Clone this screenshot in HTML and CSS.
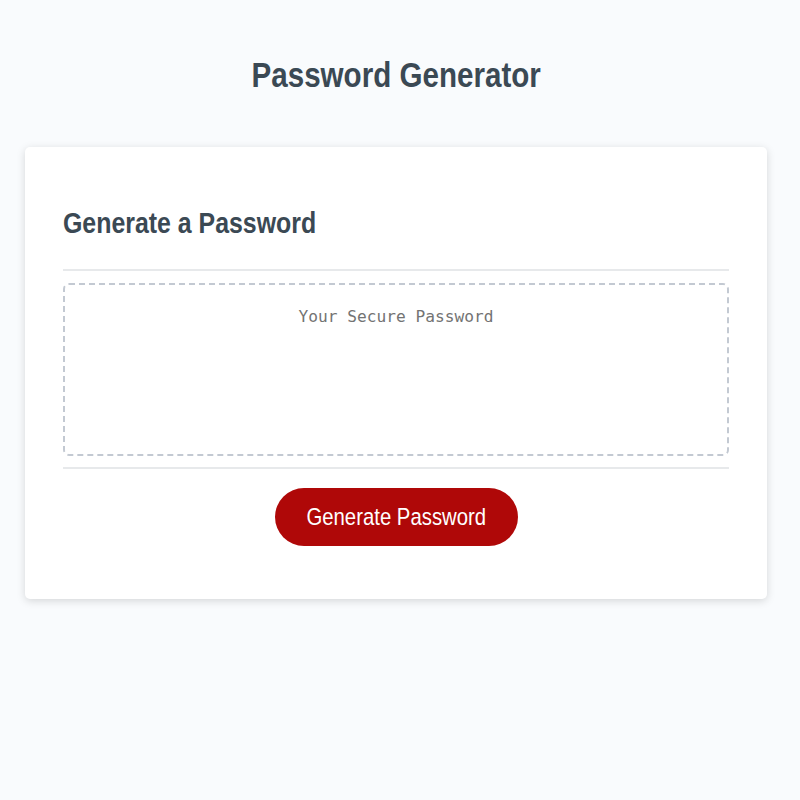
FILE: index.html
```html
<!DOCTYPE html>
<html lang="en">
<head>
<meta charset="UTF-8">
<title>Password Generator</title>
<link rel="stylesheet" href="styles.css">
</head>
<body>
<div class="wrapper">
  <header class="page-header">
    <h1 class="page-title"><span class="squeeze squeeze-center">Password Generator</span></h1>
  </header>
  <div class="card">
    <div class="card-header">
      <h2 class="card-title"><span class="squeeze squeeze-left">Generate a Password</span></h2>
    </div>
    <div class="card-body">
      <textarea class="password" readonly placeholder="Your Secure Password" aria-label="Generated Password"></textarea>
    </div>
    <div class="card-footer">
      <button class="btn" type="button"><span class="squeeze squeeze-center">Generate Password</span></button>
    </div>
  </div>
</div>
</body>
</html>
```

FILE: styles.css
```css
* {
  box-sizing: border-box;
}

html, body {
  margin: 0;
  padding: 0;
}

body {
  background-color: #f9fbfd;
  font-family: "Liberation Sans", Arial, sans-serif;
  color: #3b4954;
}

.squeeze {
  display: inline-block;
  white-space: nowrap;
}

.squeeze-center {
  transform-origin: center center;
}

.squeeze-left {
  transform-origin: left center;
}

.wrapper {
  padding: 55px 33px 40px 25px;
}

.page-header {
  text-align: center;
  margin-bottom: 52px;
}

.page-title {
  margin: 0;
  font-size: 35px;
  line-height: 40px;
  font-weight: bold;
  color: #3b4954;
}

.page-title .squeeze {
  transform: scaleX(0.845);
}

.card {
  background-color: #ffffff;
  border-radius: 5px;
  box-shadow: rgba(0, 0, 0, 0.15) 0 2px 8px 0;
  padding: 59px 38px 53px 38px;
}

.card-title {
  margin: 0 0 29px 0;
  font-size: 29px;
  line-height: 34px;
  font-weight: bold;
  color: #3b4954;
}

.card-title .squeeze {
  transform: scaleX(0.858);
}

.card-header::after,
.card-footer::before {
  content: "";
  display: block;
  width: 100%;
  height: 2px;
  background: #e7e9eb;
}

.card-body {
  padding: 12px 0 11px 0;
}

.password {
  display: block;
  width: 100%;
  height: 173px;
  margin: 0;
  padding: 22px 20px;
  border: 2px dashed #c3c9d2;
  border-radius: 6px;
  background: transparent;
  font-family: "DejaVu Sans Mono", "Liberation Mono", monospace;
  font-size: 16.2px;
  text-align: center;
  resize: none;
  outline: none;
  color: #3b4954;
}

.password::placeholder {
  color: #737373;
  opacity: 1;
}

.card-footer {
  text-align: center;
}

.btn {
  display: inline-block;
  margin-top: 19px;
  width: 243px;
  height: 58px;
  border: none;
  border-radius: 29px;
  background-color: #af0808;
  color: #ffffff;
  font-family: "Liberation Sans", Arial, sans-serif;
  font-size: 24.5px;
  line-height: 58px;
  padding: 0;
  cursor: pointer;
}

.btn .squeeze {
  transform: scaleX(0.83);
}
```
